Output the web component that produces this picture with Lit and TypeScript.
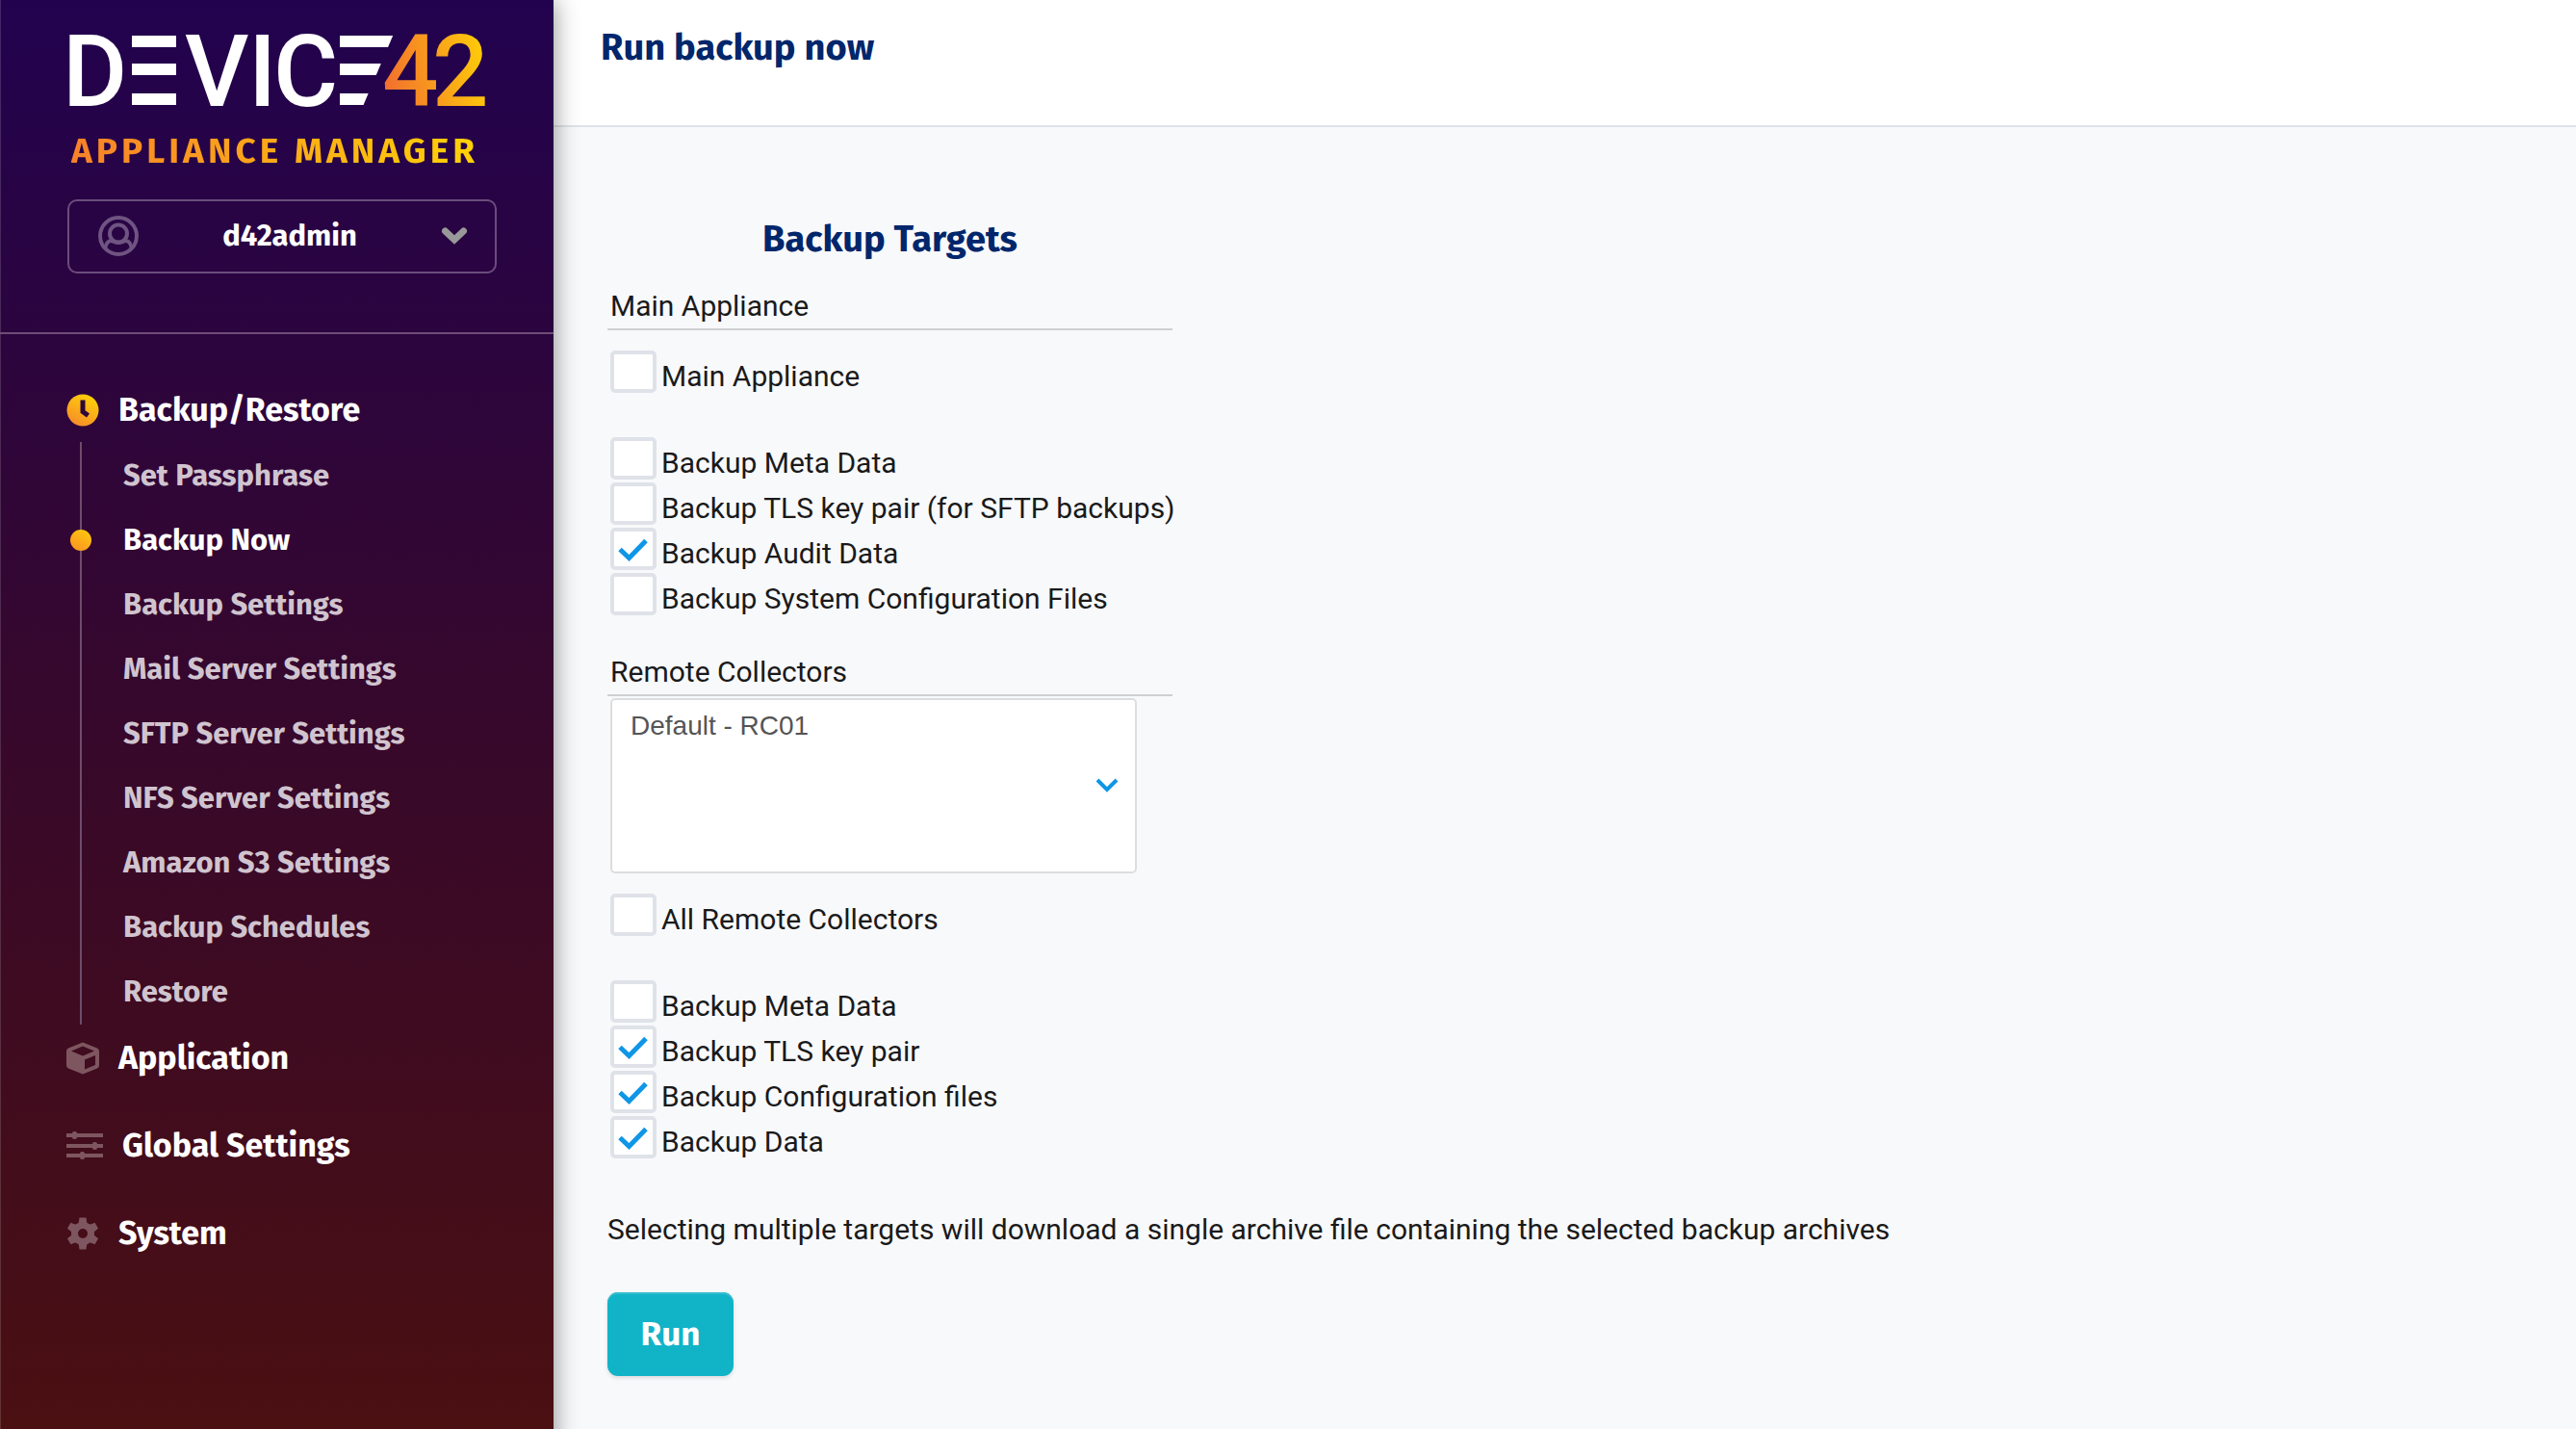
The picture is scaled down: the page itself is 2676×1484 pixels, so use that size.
import { LitElement, html, css, svg, nothing } from "lit";
import { customElement, state } from "lit/decorators.js";
import { classMap } from "lit/directives/class-map.js";

interface Target {
  id: string;
  label: string;
  checked: boolean;
}

const subPages = [
  "Set Passphrase",
  "Backup Now",
  "Backup Settings",
  "Mail Server Settings",
  "SFTP Server Settings",
  "NFS Server Settings",
  "Amazon S3 Settings",
  "Backup Schedules",
  "Restore",
];

const logo = html`
  <svg class="logo" viewBox="0 0 432 80" role="img" aria-label="DEVICE42">
    <defs>
      <linearGradient id="warm" gradientUnits="userSpaceOnUse" x1="328" y1="50" x2="432" y2="30">
        <stop offset="0" stop-color="#f2702e" />
        <stop offset="1" stop-color="#ffcb0a" />
      </linearGradient>
      <clipPath id="slant"><polygon points="270,0 337,0 303,80 270,80" /></clipPath>
    </defs>
    <g class="word">
      <text x="-7" y="75">D</text>
      <text x="120" y="75">V</text>
      <text x="186" y="75">I</text>
      <text x="212" y="75">C</text>
      <text x="325" y="75" fill="url(#warm)">4</text>
      <text x="377" y="75" fill="url(#warm)">2</text>
    </g>
    <g fill="#fff">
      <rect x="65" y="2" width="46" height="12" />
      <rect x="65" y="31" width="46" height="12" />
      <rect x="65" y="62" width="46" height="12" />
    </g>
    <g fill="#fff" clip-path="url(#slant)">
      <rect x="281" y="2" width="60" height="12" />
      <rect x="281" y="31" width="60" height="12" />
      <rect x="281" y="62" width="60" height="12" />
    </g>
  </svg>
`;

const clockIcon = html`
  <svg class="icon" width="34" height="34" viewBox="0 0 34 34" aria-hidden="true">
    <defs>
      <linearGradient id="clock" x1="0.2" y1="1" x2="0.7" y2="0">
        <stop offset="0" stop-color="#f7892b" />
        <stop offset="1" stop-color="#ffd108" />
      </linearGradient>
    </defs>
    <circle cx="17" cy="17" r="16.5" fill="url(#clock)" />
    <path d="M17 6.500V18.500L22.500 22.500" fill="none" stroke="#2d063a" stroke-width="5" />
  </svg>
`;

const boxIcon = html`
  <svg class="icon" width="34" height="34" viewBox="0 0 34 34" aria-hidden="true">
    <path
      fill="#7e5660"
      fill-rule="evenodd"
      d="M17 0.500L32 6.500Q34 7.500 34 9.500V24.500Q34 26.500 32 27.500L17 33.500L2 27.500Q0 26.500 0 24.500V9.500Q0 7.500 2 6.500ZM17 4.500L5 9.500L17 14.500L29 9.500ZM19 18.500V28.500L30 24V14Z"
    />
  </svg>
`;

const slidersIcon = html`
  <svg class="icon" width="38" height="30" viewBox="0 0 38 30" aria-hidden="true">
    <g fill="#7e5660">
      <rect x="0" y="2" width="38" height="4" />
      <rect x="0" y="13" width="38" height="4" />
      <rect x="0" y="23" width="38" height="4" />
      <rect x="6" y="0" width="5" height="8" rx="2" />
      <rect x="27" y="11" width="5" height="8" rx="2" />
      <rect x="14" y="21" width="5" height="8" rx="2" />
    </g>
  </svg>
`;

const gearIcon = html`
  <svg class="icon" width="34" height="34" viewBox="0 0 34 34" aria-hidden="true">
    <g fill="none" stroke="#7e5660">
      <circle cx="17" cy="17" r="8.500" stroke-width="7" />
      ${[0, 60, 120, 180, 240, 300].map(
        (a) => svg`<path d="M12.500 7.500L13.500 0.500H20.500L21.500 7.500Z" fill="#7e5660" stroke="none" transform="rotate(${a} 17 17)" />`
      )}
    </g>
  </svg>
`;

@customElement("app-root")
export class AppRoot extends LitElement {
  @state() private mainAll: Target[] = [{ id: "main-all", label: "Main Appliance", checked: false }];
  @state() private mainParts: Target[] = [
    { id: "main-meta", label: "Backup Meta Data", checked: false },
    { id: "main-tls", label: "Backup TLS key pair (for SFTP backups)", checked: false },
    { id: "main-audit", label: "Backup Audit Data", checked: true },
    { id: "main-config", label: "Backup System Configuration Files", checked: false },
  ];
  @state() private remoteAll: Target[] = [{ id: "rc-all", label: "All Remote Collectors", checked: false }];
  @state() private remoteParts: Target[] = [
    { id: "rc-meta", label: "Backup Meta Data", checked: false },
    { id: "rc-tls", label: "Backup TLS key pair", checked: true },
    { id: "rc-config", label: "Backup Configuration files", checked: true },
    { id: "rc-data", label: "Backup Data", checked: true },
  ];

  static styles = css`
    :host {
      --display: "Fira Sans", Roboto, sans-serif;
      --body: Roboto, sans-serif;
      --navy: #00266b;
      --line: #dfe2e8;
      --blue: #0f96e6;
      display: flex;
      min-height: 100vh;
      background: #f8f9fb;
      color: #1a1a1a;
      font: 400 30px/32px var(--body);
    }
    * {
      box-sizing: border-box;
    }
    h1,
    h2,
    h3,
    p,
    ul {
      margin: 0;
      padding: 0;
    }
    ul {
      list-style: none;
    }
    a {
      color: inherit;
      text-decoration: none;
    }

    .sidebar {
      display: flex;
      flex-direction: column;
      flex: 0 0 575px;
      position: relative;
      color: #fff;
      font-family: var(--display);
      font-weight: 700;
      background: linear-gradient(#22024f, #37082b 50%, #4b1010);
      box-shadow: inset 1px 0 rgba(255, 255, 255, 0.15), 0 0 24px rgba(0, 0, 0, 0.45);
    }
    .brand {
      display: flex;
      flex-direction: column;
      padding: 35px 59px 61px 70px;
      border-bottom: 2px solid #6f4c77;
    }
    .logo {
      display: block;
      width: 432px;
      height: 80px;
      margin-left: 2px;
      overflow: visible;
    }
    .word {
      fill: #fff;
      font: 500 103px Roboto, sans-serif;
    }
    .product {
      align-self: flex-start;
      margin: 22px 0 0 4px;
      font-size: 37px;
      line-height: 40px;
      letter-spacing: 4px;
      background: linear-gradient(90deg, #f7812a, #ffd206);
      background-clip: text;
      color: transparent;
    }
    .user {
      display: grid;
      grid-template-columns: 42px 1fr 28px;
      align-items: center;
      height: 77px;
      margin-top: 30px;
      padding: 0 28px 2px 30px;
      border: 2px solid #6a4d7b;
      border-radius: 10px;
      background: none;
      color: #fff;
      font: 700 31px/36px var(--display);
    }

    .menu {
      padding: 58px 0 0 69px;
    }
    .section {
      display: flex;
      align-items: center;
      gap: 20px;
      height: 41px;
      font-size: 34px;
      margin-bottom: 50px;
    }
    .section.open {
      margin-bottom: 13px;
    }
    .icon {
      flex: none;
    }
    .sub {
      margin: 0 0 14px 14px;
      padding: 1px 0;
      border-left: 2px solid #6f4c6b;
    }
    .sub li {
      display: flex;
      align-items: center;
      position: relative;
      height: 67px;
      padding-left: 43px;
      font-size: 31px;
      color: #d0c4cf;
    }
    .sub .current {
      color: #fff;
    }
    .sub .current::before {
      content: "";
      position: absolute;
      left: -12px;
      width: 22px;
      height: 22px;
      border-radius: 50%;
      background: linear-gradient(30deg, #f98f26, #ffcd0b);
    }
    .foot {
      height: 22px;
      margin-top: auto;
      background: #4b1721;
    }

    .main {
      flex: 1;
      min-width: 0;
    }
    .top {
      height: 132px;
      padding: 26px 49px;
      background: #fff;
      border-bottom: 2px solid var(--line);
    }
    h1,
    h2 {
      font: 700 38px/46px var(--display);
      color: var(--navy);
    }
    .content {
      padding: 93px 56px;
    }
    .targets {
      width: 587px;
    }
    h2 {
      text-align: center;
      margin-bottom: 31px;
    }
    h3 {
      height: 41px;
      padding-left: 3px;
      border-bottom: 2px solid #cfd0d2;
      font: inherit;
    }
    .checks {
      display: grid;
      gap: 3px;
      padding-left: 3px;
      margin-top: 21px;
    }
    .checks + .checks {
      margin-top: 46px;
    }
    .check {
      display: grid;
      grid-template-columns: 48px 1fr;
      column-gap: 5px;
      height: 44px;
    }
    .check input {
      grid-area: 1 / 1;
      appearance: none;
      width: 48px;
      height: 44px;
      margin: 0;
      border: 4px solid var(--line);
      border-radius: 5px;
      background: #fff;
    }
    .check svg {
      grid-area: 1 / 1;
      pointer-events: none;
    }
    .check label {
      padding-top: 11px;
      white-space: nowrap;
    }
    .remote {
      margin-top: 43px;
    }
    .picker {
      display: grid;
      align-items: center;
      width: 547px;
      margin: 2px 0 0 3px;
    }
    .picker select {
      grid-area: 1 / 1;
      appearance: none;
      width: 100%;
      height: 182px;
      padding: 11px 17px;
      border: 2px solid #dcdddf;
      border-radius: 5px;
      background: #fff;
      color: #555;
      font: 28px/36px "Liberation Sans", sans-serif;
      overflow: hidden;
      outline: none;
    }
    .picker option {
      padding: 0 2px;
      min-height: 36px;
    }
    .picker svg {
      grid-area: 1 / 1;
      justify-self: end;
      margin-right: 19px;
      pointer-events: none;
    }
    .note {
      margin-top: 58px;
    }
    .run {
      display: block;
      width: 131px;
      height: 87px;
      margin-top: 49px;
      padding: 0 0 2px;
      border: 0;
      border-radius: 11px;
      background: #11b3c7;
      box-shadow: inset 0 2px #35becf, 0 2px 4px rgba(0, 0, 0, 0.12);
      color: #fff;
      font: 700 35px/40px var(--display);
    }
  `;

  private checks(items: Target[], done: (next: Target[]) => void) {
    return html`
      <div class="checks">
        ${items.map(
          (t) => html`
            <div class="check">
              <input
                type="checkbox"
                id=${t.id}
                .checked=${t.checked}
                @change=${() => done(items.map((o) => (o === t ? { ...o, checked: !o.checked } : o)))}
              />
              ${t.checked
                ? html`<svg width="48" height="44" viewBox="0 0 48 44" aria-hidden="true">
                    <path d="M10 22.500L19.500 31.500L37 13.500" fill="none" stroke="#0f96e6" stroke-width="5" />
                  </svg>`
                : nothing}
              <label for=${t.id}>${t.label}</label>
            </div>
          `
        )}
      </div>
    `;
  }

  render() {
    return html`
      <aside class="sidebar">
        <div class="brand">
          ${logo}
          <div class="product">APPLIANCE MANAGER</div>
          <button class="user" type="button">
            <svg width="42" height="42" viewBox="0 0 42 42" fill="none" stroke="#6f5482" stroke-width="4" aria-hidden="true">
              <circle cx="21" cy="21" r="19" />
              <circle cx="21" cy="18.500" r="9" />
              <path d="M7.500 33.500C8 27.500 12 25 15 26.500Q21 29.500 27 26.500C30 25 34 27.500 34.500 33.500" />
            </svg>
            <span>d42admin</span>
            <svg width="28" height="20" viewBox="0 0 28 20" aria-hidden="true">
              <path d="M4.500 5L14 14L23.500 5" fill="none" stroke="#999" stroke-width="7" stroke-linecap="round" />
            </svg>
          </button>
        </div>
        <nav class="menu">
          <a class="section open" href="#backup">${clockIcon}<span>Backup/Restore</span></a>
          <ul class="sub">
            ${subPages.map(
              (name) => html`<li class=${classMap({ current: name === "Backup Now" })}><a href="#page">${name}</a></li>`
            )}
          </ul>
          <a class="section" href="#application">${boxIcon}<span>Application</span></a>
          <a class="section" href="#global">${slidersIcon}<span>Global Settings</span></a>
          <a class="section" href="#system">${gearIcon}<span>System</span></a>
        </nav>
        <div class="foot"></div>
      </aside>

      <main class="main">
        <header class="top"><h1>Run backup now</h1></header>
        <form class="content" @submit=${(e: Event) => e.preventDefault()}>
          <div class="targets">
            <h2>Backup Targets</h2>
            <section>
              <h3>Main Appliance</h3>
              ${this.checks(this.mainAll, (n) => (this.mainAll = n))}
              ${this.checks(this.mainParts, (n) => (this.mainParts = n))}
            </section>
            <section class="remote">
              <h3 id="collectors">Remote Collectors</h3>
              <div class="picker">
                <select multiple size="4" aria-labelledby="collectors">
                  <option>Default - RC01</option>
                </select>
                <svg width="24" height="16" viewBox="0 0 24 16" aria-hidden="true">
                  <path d="M2 2L12 12L22 2" fill="none" stroke="#0f96e6" stroke-width="4" />
                </svg>
              </div>
              ${this.checks(this.remoteAll, (n) => (this.remoteAll = n))}
              ${this.checks(this.remoteParts, (n) => (this.remoteParts = n))}
            </section>
          </div>
          <p class="note">
            Selecting multiple targets will download a single archive file containing the selected backup archives
          </p>
          <button class="run" type="submit">Run</button>
        </form>
      </main>
    `;
  }
}
